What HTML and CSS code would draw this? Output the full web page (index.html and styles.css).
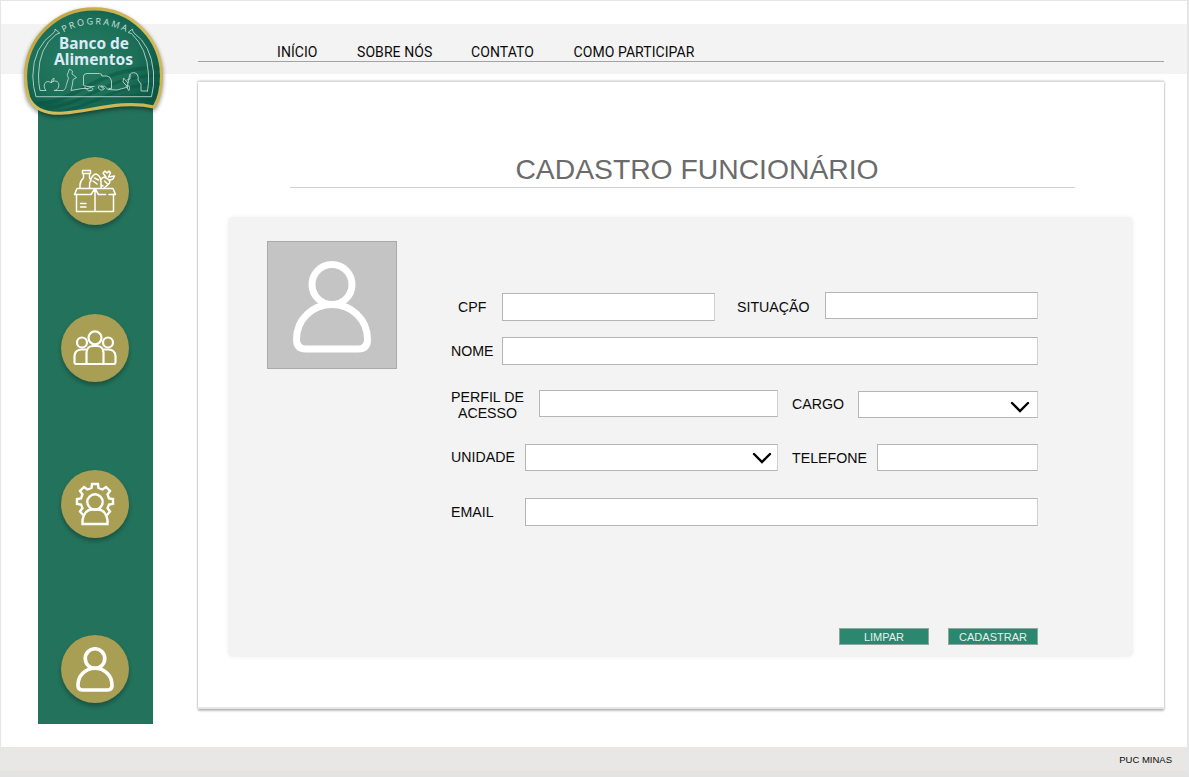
FILE: index.html
```html
<!DOCTYPE html>
<html lang="pt-BR">
<head>
<meta charset="utf-8">
<title>Cadastro Funcionário</title>
<link rel="stylesheet" href="styles.css">
</head>
<body>
<div class="page">
  <header class="header">
    <nav class="nav">
      <a>INÍCIO</a><a>SOBRE NÓS</a><a>CONTATO</a><a>COMO PARTICIPAR</a>
    </nav>
  </header>

  <svg class="logo" width="160" height="125" viewBox="15 0 160 125">
    <defs>
      <linearGradient id="gold" x1="0" y1="0" x2="1" y2="1">
        <stop offset="0" stop-color="#bd9d3a"/><stop offset=".5" stop-color="#d3bd5c"/><stop offset="1" stop-color="#c9b351"/>
      </linearGradient>
      <radialGradient id="green" cx=".42" cy=".48" r=".62">
        <stop offset="0" stop-color="#277f63"/><stop offset=".65" stop-color="#1b6e57"/><stop offset="1" stop-color="#0c5846"/>
      </radialGradient>
      <clipPath id="seal"><path d="M27 77C27 40 57 10.500 94 10.500C131 10.500 160 40 160 76C160 87 158 97 153.500 105C122 98 88 109 64 110.500C47 112 35 106 30 96Q27 87 27 77Z"/></clipPath>
      <path id="arc" d="M63.500 32.500Q94 16 127 32.500"/>
    </defs>
    <path class="logo-edge" d="M25.500 77C25.500 39 56 8.800 94 8.800C132 8.800 161.500 39 161.500 76C161.500 88 159 99 154 107C122 99.500 90 111.500 64 113C45 114.500 33 108 28.500 97Q25.500 87 25.500 77Z" fill="url(#green)" stroke="url(#gold)" stroke-width="3.200"/>
    <g clip-path="url(#seal)" fill="none" stroke="#0b5543" stroke-opacity=".55">
      <path d="M30 103C75 108 92 65 165 68" stroke-width="4"/>
      <path d="M45 108C90 105 105 73 165 76" stroke-width="3"/>
      <path d="M65 111C105 100 120 83 165 84" stroke-width="3"/>
      <path d="M30 103C70 107 105 94 160 97" stroke-width="5" stroke-opacity=".3"/>
    </g>
    <g fill="none" stroke="#b9d5ce" stroke-width=".9" stroke-linejoin="round" stroke-linecap="round">
      <path d="M59.500 33L55 29Q55.500 31 54 32.500Q33 47 32.800 76Q33 87 36 96.700H151.500Q154.500 86 153.500 72Q151 45 134 33Q132.500 31.500 132.500 29L128 32.500L131.500 33.500Q147 48 148.500 74Q149 84 147.500 91"/>
      <path d="M59.500 33L56 34.500Q39 47 38.500 75Q38.500 84 40 90.500H46C42 86 45 79 51 82.500C56 79 60 82 58.500 87C58 89 56 90.500 54 90.500H62C65 91 66 87 66.500 84.500L68.500 78Q66 75 68 73L69.500 69L72.500 71L72 74L76.500 77.500L73 79.500L72.500 84L71 90.500L82 88.500H88C92 86 94 89 92 90.500Q88 92 86 88.500H85V87"/>
      <path d="M51.500 82.500Q51 79 54 78Q55 80 51.500 82.500M83.500 85V76Q84 73.500 87 73.500H99.500Q102 73.500 102 76H107L110 77.500L111.500 81V88.500H109M83.500 85Q84 87 94 86.500M103 88.500Q98 83 98.500 88Q101 92 104.500 88.500L101 86Q105 85 108 89.500L117 90L128 87L123 82L123.500 78L128 83Q129 76 130 74.500Q133 71 137 74Q139 77 138 80L141 84V91H147.500M128 83Q126 89 129 90.500Q131 84 126 86M130 74.500V79L127 80"/>
    </g>
    <text class="logo-program"><textPath href="#arc" textLength="65">PROGRAMA</textPath></text>
    <text class="logo-name" x="59" y="49" textLength="70" lengthAdjust="spacingAndGlyphs">Banco de</text>
    <text class="logo-name" x="54" y="64.800" textLength="79" lengthAdjust="spacingAndGlyphs">Alimentos</text>
  </svg>

  <main class="main">
    <aside class="sidebar">
      <a class="round"><svg width="44" height="46" viewBox="0 0 44 46" fill="none" stroke="#fff" stroke-width="1.500" stroke-linejoin="round" stroke-linecap="round">
        <path d="M3.500 26V43.500H40.500V26M22 20.500V43.500M4 20.500H40L42.500 26.500H36M4 20.500L1.500 26.500H18L22 20.500L25.500 26.500H32.500M7.500 35.500H13M7.500 39H13"/>
        <path d="M9.500 2.500H17.500V5.500H9.500ZM10.500 6V10Q7 13 7 17V20M16.500 6V10Q18 12 18 13M16.500 20C16 12 20 6 23 6Q27 7 28 13V20M20 13L24 16M21.500 10L25.500 12M27.500 12Q30 8 33 10Q38 12 36.500 15Q34 18 31 20M31.500 13L34 15.500M28 17L30 18M33 9L30 5L32 3L34 5L36 3L37.500 5L35.500 9L41.500 8L40 11L36 12.500"/>
      </svg></a>
      <a class="round"><svg width="44" height="36" viewBox="0 0 44 36" fill="none" stroke="#fff" stroke-width="2.200">
        <circle cx="22" cy="7.800" r="6.500"/><circle cx="9" cy="12.500" r="5"/><circle cx="35" cy="12.500" r="5"/>
        <path d="M13.500 34V22.500Q14 16 20 16H24Q30 16 30.500 22.500V34M13.500 19.500H8Q2 20 1.500 26V32Q1.500 34 3.500 34H40.500Q42.500 34 42.500 32V26Q42 20 36 19.500H30.500"/>
      </svg></a>
      <a class="round"><svg width="40" height="44" viewBox="0 0 40 44" fill="none" stroke="#fff" stroke-width="2.400">
        <circle cx="20" cy="20" r="7.700"/>
        <path d="M7.500 42V38Q9 28 17 27.500H23Q31 28 32.500 38V42Z"/>
        <path d="M8 33L5 29.500L7.500 26L6 22.500L2 22V17L6 16.500L7.500 12.500L5 9L9 5L12.500 7.500L16.500 6L17 2H23L23.500 6L27.500 7.500L31 5L35 9L32.500 12.500L34 16.500L38 17V22L34 22.500L32.500 26L35 29.500L32 33"/>
      </svg></a>
      <a class="round"><svg width="38" height="45" viewBox="0 0 78 92" fill="none" stroke="#fff" stroke-width="7.500">
        <circle cx="39" cy="23.500" r="20"/><path d="M4 78.500C4 58 20 43.500 39 43.500S74 58 74 78.500Q74 88 65 88H13Q4 88 4 78.500Z"/>
      </svg></a>
    </aside>

    <section class="card">
      <h1 class="title">CADASTRO FUNCIONÁRIO</h1>
      <form class="panel">
        <div class="avatar"><svg width="78" height="92" viewBox="0 0 78 92" fill="none" stroke="#fff" stroke-width="7">
          <circle cx="39" cy="23.500" r="20"/><path d="M3.500 78.500C3.500 58 20 43.500 39 43.500S74.500 58 74.500 78.500Q74.500 88 65 88H13Q3.500 88 3.500 78.500Z"/>
        </svg></div>
        <div class="fields">
          <div class="row row-cpf">
            <label class="indent">CPF</label><span class="input tall lowered"></span>
            <label>SITUAÇÃO</label><span class="input"></span>
          </div>
          <div class="row row-name"><label>NOME</label><span class="input tall"></span></div>
          <div class="row row-profile">
            <label class="two-lines">PERFIL DE<br>ACESSO</label><span class="input"></span>
            <label>CARGO</label><span class="input select lowered"><svg width="20" height="12" viewBox="0 0 20 12"><path d="M2 2L10 10L18 2"/></svg></span>
          </div>
          <div class="row row-unit">
            <label>UNIDADE</label><span class="input select"><svg width="20" height="12" viewBox="0 0 20 12"><path d="M2 2L10 10L18 2"/></svg></span>
            <label>TELEFONE</label><span class="input"></span>
          </div>
          <div class="row row-email"><label>EMAIL</label><span class="input tall"></span></div>
          <div class="actions"><button type="button">LIMPAR</button><button type="button">CADASTRAR</button></div>
        </div>
      </form>
    </section>
  </main>
  <footer class="footer">PUC MINAS</footer>
</div>
</body>
</html>
```

FILE: styles.css
```css
* { box-sizing: border-box; }
body { margin: 0; font-family: "Liberation Sans", Arial, sans-serif; color: #0b0b0b; }
.page {
  position: relative;
  display: flex;
  flex-direction: column;
  width: 1189px;
  height: 777px;
  padding-top: 23px;
  overflow: hidden;
  background: #fff;
  border: solid #e6e6e6;
  border-width: 1px 2px 0 1px;
  border-bottom: 6px solid #e3e3e3;
}
.header { height: 50px; padding: 18px 23px 0 197px; background: #f3f3f3; }
.nav {
  display: grid;
  grid-template-columns: 80px 114px 102.500px auto;
  height: 20px;
  padding-left: 79px;
  border-bottom: 1px solid #a3a3a3;
  font: 14px/20px Roboto, sans-serif;
  letter-spacing: .07px;
}
.logo {
  position: absolute;
  left: 14px;
  top: -1px;
}
.logo-edge { filter: drop-shadow(0 2px 2px rgba(0, 0, 0, .45)); }
.logo-program { font: 9px "Noto Sans", sans-serif; fill: #c3ddd9; }
.logo-name { font: bold 16px "Noto Sans", sans-serif; fill: #dce9f7; }

.main { display: flex; flex: 1; padding-left: 37px; }
.sidebar {
  display: flex;
  flex-direction: column;
  align-items: center;
  width: 115px;
  height: 650px;
  padding: 83px 1px 0 0;
  background: #23725b;
}
.round {
  display: flex;
  flex-shrink: 0;
  align-items: center;
  justify-content: center;
  width: 68px;
  height: 68px;
  margin-bottom: 88.500px;
  border-radius: 50%;
  background: #a89e54;
  box-shadow: 0 3px 4px rgba(0, 0, 0, .28);
}
.round:nth-child(3) { margin-bottom: 97px; }

.card {
  width: 966px;
  height: 628px;
  margin: 7px 0 0 45px;
  padding: 69px 31px 0 30px;
  border-top: 1px solid #d9d9d9;
  border-bottom: 2px solid #e6e6e6;
  background: #fff;
  box-shadow: 0 2px 2px rgba(0, 0, 0, .22), 0 0 2px rgba(0, 0, 0, .3);
}
.title {
  width: 785px;
  height: 37px;
  margin: 0 0 29px 62px;
  padding-left: 29px;
  border-bottom: 1px solid #d0d0d0;
  color: #6b6b6b;
  font-size: 28.300px;
  font-weight: 400;
  line-height: 37px;
  text-align: center;
}
.panel {
  display: flex;
  height: 440px;
  padding: 24px 94px 0 39px;
  border-radius: 5px;
  background: #f3f3f3;
  box-shadow: 0 0 4px #f0f0f0;
}
.avatar {
  display: flex;
  justify-content: center;
  width: 130px;
  height: 128px;
  padding-top: 19px;
  border: 1px solid #a9a9a9;
  background: #c4c4c4;
}
.fields { width: 587px; margin-left: 54px; padding-top: 51px; font-size: 14.200px; }
.row { display: grid; align-items: center; height: 28px; white-space: nowrap; }
.row-cpf { grid-template-columns: 51px 213px 22px 88px 213px; margin-bottom: 17px; }
.row-cpf label { padding-top: 1px; }
.row-cpf label:nth-of-type(2) { grid-column: 4; }
.row-name { grid-template-columns: 51px 536px; margin-bottom: 25px; }
.row-profile {
  grid-template: 28px / 88px 239px 14px 66px 180px;
  margin-bottom: 26px;
}
.row-unit { grid-template-columns: 74px 253px 14px 85px 161px; margin-bottom: 26px; }
.row-unit label { padding-bottom: 2px; }
.row-unit label:nth-of-type(2) { padding-bottom: 0; }
.row-profile label:nth-of-type(2), .row-unit label:nth-of-type(2) { grid-column: 4; }
.row-email { grid-template-columns: 74px 513px; }
.indent { padding-left: 7px; }
.two-lines { width: 73px; padding-top: 2px; line-height: 16.500px; text-align: center; }
.input {
  height: 27px;
  align-self: start;
  border: 1px solid #b5b5b5;
  border-right-color: #cfcfcf;
  background: #fff;
}
.tall { height: 28px; }
.lowered { margin-top: 1px; }
.select { display: flex; align-items: center; justify-content: flex-end; padding: 1px 5px 0 0; }
.select.lowered { padding: 5px 7px 0 0; }
.select path { fill: none; stroke: #000; stroke-width: 2.400; stroke-linecap: round; }
.actions { display: flex; justify-content: flex-end; gap: 19px; margin-top: 102px; }
.actions button {
  width: 90px;
  height: 17px;
  padding: 0;
  border: 1px solid #8fa69e;
  background: #2b876d;
  color: #e6f2ee;
  font: 11px/14px "Liberation Sans", Arial, sans-serif;
}
.footer {
  height: 24px;
  padding-right: 15px;
  background: #e8e7e5;
  font-size: 9.500px;
  line-height: 25px;
  text-align: right;
}
```
